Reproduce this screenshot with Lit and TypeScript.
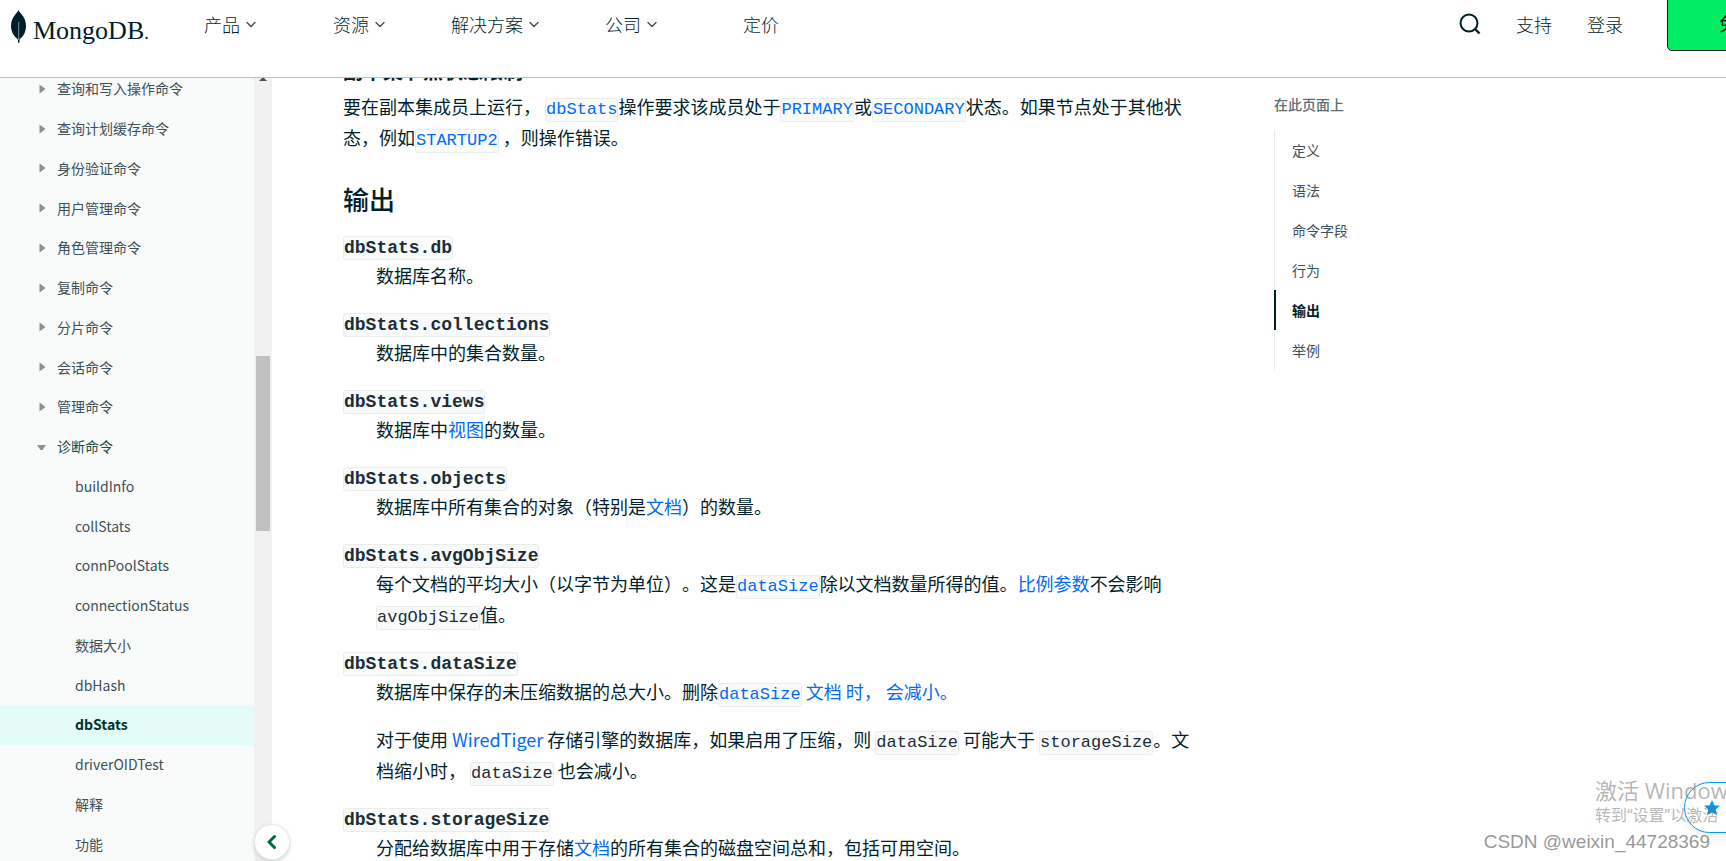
import { LitElement, html, css, svg } from "lit";
import { customElement, state } from "lit/decorators.js";
import { classMap } from "lit/directives/class-map.js";

const chevron = svg`<path d="M1 1.5 5 5.5 9 1.5" fill="none" stroke="#3d4f58" stroke-width="1.4" stroke-linecap="round" />`;

@customElement("site-header")
class SiteHeader extends LitElement {
  static styles = css`
    :host {
      display: block;
      overflow: hidden;
      border-bottom: 1px solid #b8c4c2;
      background: #fff;
    }
    .bar {
      display: flex;
      align-items: flex-start;
      height: 77px;
      padding-left: 10px;
    }
    a {
      color: #001e2b;
      text-decoration: none;
    }
    .logo {
      display: flex;
      align-items: flex-start;
      gap: 6px;
      padding-top: 10px;
      width: 194px;
      flex: none;
      font: 26px/42px "Liberation Serif", serif;
    }
    .logo svg {
      flex: none;
    }
    .logo small {
      font-size: 18px;
    }
    nav {
      display: flex;
      flex: 1;
      gap: 66px;
      line-height: 48px;
      font-weight: 300;
      white-space: nowrap;
    }
    .item {
      display: flex;
      align-items: center;
      gap: 6px;
      height: 48px;
      padding: 0;
      border: 0;
      background: none;
      font: inherit;
      color: #001e2b;
    }
    .item:first-child {
      margin-right: 11px;
    }
    .plain {
      padding-left: 20px;
    }
    .tools {
      display: flex;
      flex: none;
      gap: 35px;
      line-height: 48px;
      font-weight: 300;
    }
    .search {
      height: 48px;
      padding: 0;
      border: 0;
      background: none;
      display: flex;
      align-items: center;
    }
    .cta {
      box-sizing: border-box;
      flex: none;
      width: 176px;
      height: 56px;
      margin: -5px -117px 0 44px;
      border: 1px solid #001e2b;
      border-radius: 5px;
      background: #00ed64;
      color: #001e2b;
      font: inherit;
      font-weight: 400;
    }
  `;

  render() {
    return html`
      <header class="bar">
        <a class="logo" href="#" aria-label="MongoDB">
          <svg width="17" height="34" viewBox="0 0 17 34">
            <path
              d="M8.6 0C7.9 1.6 6.6 2.9 5.3 4.5 2.600 7.800 1 11.700 1 16c0 5.700 3 10.300 6.700 13.100L8.200 33h1l.5-3.900C13.500 26.400 16 21.800 16 16c0-4.700-1.800-8.600-4.300-11.500C10.400 2.900 9.200 1.600 8.600 0z"
              fill="#001e2b"
            />
            <path d="M8.700 12v18" stroke="#8aa09c" stroke-width="0.900" />
          </svg>
          <span>MongoDB<small>.</small></span>
        </a>
        <nav>
          ${["产品", "资源", "解决方案", "公司"].map(
            (t) => html`<button class="item">
              <span>${t}</span><svg width="10" height="7" viewBox="0 0 10 7">${chevron}</svg>
            </button>`
          )}
          <a class="plain" href="#">定价</a>
        </nav>
        <div class="tools">
          <button class="search" aria-label="搜索">
            <svg width="22" height="22" viewBox="0 0 22 22" fill="none" stroke="#001e2b" stroke-width="2">
              <circle cx="10" cy="10" r="8.500" />
              <path d="M16 16l4.500 4.500" stroke-width="2.400" />
            </svg>
          </button>
          <a href="#">支持</a>
          <a href="#">登录</a>
        </div>
        <button class="cta">免费试用</button>
      </header>
    `;
  }
}

@customElement("side-nav")
class SideNav extends LitElement {
  static styles = css`
    :host {
      display: grid;
      grid-template-columns: minmax(0, 1fr) 18px;
      position: relative;
      min-height: 0;
      background: #f9fbfa;
      font-size: 14px;
    }
    .clip {
      overflow: hidden;
      min-height: 0;
      height: 100%;
    }
    ul {
      list-style: none;
      margin: -9px 0 0;
      padding: 0;
      height: calc(100% + 12px);
      display: grid;
      grid-auto-rows: minmax(36px, 1fr);
    }
    a {
      display: flex;
      align-items: center;
      height: 100%;
      color: #3d4f58;
      text-decoration: none;
    }
    .group {
      gap: 11px;
      padding-left: 37px;
    }
    .group svg {
      flex: none;
    }
    .leaf {
      padding-left: 75px;
    }
    .open {
      color: #1c4a40;
    }
    .current {
      background: #e3fcf7;
      color: #00332b;
      font-weight: 700;
    }
    .track {
      display: grid;
      grid-template-rows: 278fr 175fr 330fr;
      justify-items: center;
      background: #f1f1f1;
    }
    .thumb {
      grid-row: 2;
      width: 14px;
      background: #c1c1c1;
    }
    .arrow {
      grid-row: 1;
      width: 8px;
      height: 3px;
      background: #505050;
      clip-path: polygon(3px 0, 5px 0, 100% 100%, 0 100%);
    }
    .fold {
      position: absolute;
      right: -17px;
      bottom: 2px;
      width: 34px;
      height: 34px;
      padding: 0;
      border: 0;
      border-radius: 50%;
      background: #fff;
      box-shadow: 0 0 1px 1px #e8edeb, 0 2px 5px rgba(0, 30, 43, 0.250);
      display: grid;
      place-items: center;
      z-index: 1;
    }
  `;

  @state() private groups = [
    "查询和写入操作命令",
    "查询计划缓存命令",
    "身份验证命令",
    "用户管理命令",
    "角色管理命令",
    "复制命令",
    "分片命令",
    "会话命令",
    "管理命令",
    "诊断命令",
  ];
  @state() private leaves = [
    "buildInfo",
    "collStats",
    "connPoolStats",
    "connectionStatus",
    "数据大小",
    "dbHash",
    "dbStats",
    "driverOIDTest",
    "解释",
    "功能",
  ];

  render() {
    return html`
      <nav class="clip">
        <ul>
          ${this.groups.map((g) => {
            const open = g === "诊断命令";
            return html`<li>
              <a href="#" class=${classMap({ group: true, open })}>
                <svg width="9" height="10" viewBox="0 0 9 10" fill="#889397">
                  ${open ? svg`<path d="M0 3h9L5.500 8h-2z" />` : svg`<path d="M2.500.5v9L8 5.500v-1z" />`}
                </svg>
                ${g}
              </a>
            </li>`;
          })}
          ${this.leaves.map(
            (l) => html`<li>
              <a href="#" class=${classMap({ leaf: true, current: l === "dbStats" })}>${l}</a>
            </li>`
          )}
        </ul>
      </nav>
      <div class="track"><div class="arrow"></div><div class="thumb"></div></div>
      <button class="fold" aria-label="收起">
        <svg width="10" height="16" viewBox="0 0 10 16">
          <path d="M7.500 2.500 2 8 7.500 13.500" fill="none" stroke="#00684a" stroke-width="3" stroke-linecap="round" />
        </svg>
      </button>
    `;
  }
}

@customElement("doc-article")
class DocArticle extends LitElement {
  static styles = css`
    :host {
      display: block;
      min-width: 0;
      line-height: 31px;
      text-spacing-trim: space-all;
    }
    h2,
    h3,
    p,
    dl,
    dt,
    dd {
      margin: 0;
    }
    h3 {
      margin-top: -21px;
      font-size: 20px;
      line-height: 28px;
      font-weight: 700;
    }
    h3 + p {
      margin-top: 6px;
    }
    h2 {
      margin: 30px 0 15px;
      font-size: 26px;
      line-height: 32px;
      font-weight: 500;
    }
    dt {
      line-height: 30px;
    }
    dd {
      margin: 0 0 16px 33px;
    }
    dd p + p {
      margin-top: 17px;
    }
    a {
      color: #016bf8;
      text-decoration: none;
    }
    code {
      display: inline-block;
      border: 1px solid #e8edeb;
      border-radius: 3px;
      background: #f9fbfa;
      font: 17px/22px "Liberation Mono", monospace;
      color: #1c2d38;
    }
    a code {
      color: inherit;
    }
    dt code {
      font-size: 18px;
      font-weight: 700;
    }
  `;

  private entry(name: string, body: unknown) {
    return html`<dt><code>dbStats.${name}</code></dt>
      <dd>${body}</dd>`;
  }

  render() {
    return html`
      <h3>副本集节点状态限制</h3>
      <p>要在副本集成员上运行， <a href="#"><code>dbStats</code></a>操作要求该成员处于<a href="#"><code>PRIMARY</code></a>或<a href="#"><code>SECONDARY</code></a>状态。如果节点处于其他状态，例如<a href="#"><code>STARTUP2</code></a> ，则操作错误。</p>
      <h2>输出</h2>
      <dl>
        ${this.entry("db", "数据库名称。")}
        ${this.entry("collections", "数据库中的集合数量。")}
        ${this.entry("views", html`数据库中<a href="#">视图</a>的数量。`)}
        ${this.entry("objects", html`数据库中所有集合的对象（特别是<a href="#">文档</a>）的数量。`)}
        ${this.entry(
          "avgObjSize",
          html`每个文档的平均大小（以字节为单位）。这是<a href="#"><code>dataSize</code></a>除以文档数量所得的值。<a href="#">比例参数</a>不会影响<code>avgObjSize</code>值。`
        )}
        ${this.entry(
          "dataSize",
          html`<p>数据库中保存的未压缩数据的总大小。删除<a href="#"><code>dataSize</code> 文档 时， 会减小。</a></p>
            <p>对于使用 <a href="#">WiredTiger</a> 存储引擎的数据库，如果启用了压缩，则 <code>dataSize</code> 可能大于 <code>storageSize</code>。文档缩小时， <code>dataSize</code> 也会减小。</p>`
        )}
        ${this.entry(
          "storageSize",
          html`分配给数据库中用于存储<a href="#">文档</a>的所有集合的磁盘空间总和，包括可用空间。`
        )}
      </dl>
    `;
  }
}

@customElement("page-toc")
class PageToc extends LitElement {
  static styles = css`
    :host {
      display: block;
      padding-top: 16px;
      font-size: 14px;
      line-height: 20px;
    }
    .title {
      margin: 0 0 16px;
      font-weight: 500;
      color: #5c6c75;
    }
    ul {
      list-style: none;
      margin: 0;
      padding: 0;
      box-shadow: inset 1px 0 #e8edeb;
    }
    a {
      display: block;
      padding: 10px 0 10px 16px;
      border-left: 2px solid transparent;
      color: #3d4f58;
      text-decoration: none;
    }
    .active {
      border-color: #001e2b;
      font-weight: 700;
      color: #001e2b;
    }
  `;

  render() {
    return html`
      <p class="title">在此页面上</p>
      <ul>
        ${["定义", "语法", "命令字段", "行为", "输出", "举例"].map(
          (t) => html`<li><a href="#" class=${classMap({ active: t === "输出" })}>${t}</a></li>`
        )}
      </ul>
    `;
  }
}

@customElement("app-root")
class AppRoot extends LitElement {
  static styles = css`
    :host {
      display: grid;
      grid-template-rows: auto minmax(0, 1fr);
      position: relative;
      height: 100vh;
      overflow: hidden;
      background: #fff;
      color: #001e2b;
      font: 18px/31px "Noto Sans CJK SC", sans-serif;
    }
    .body {
      display: grid;
      grid-template-columns: 272px minmax(0, 1fr);
      min-height: 0;
    }
    main {
      display: grid;
      grid-template-columns: minmax(0, 1fr) 452px;
      gap: 78px;
      padding-left: 71px;
      overflow: hidden;
    }
    .feedback {
      position: absolute;
      right: -70px;
      bottom: 28px;
      box-sizing: border-box;
      width: 112px;
      height: 51px;
      padding: 0 0 0 19px;
      display: flex;
      align-items: center;
      gap: 5px;
      border: 1px solid #0498ec;
      border-radius: 26px;
      background: #fff;
      box-shadow: 0 2px 12px rgba(0, 30, 43, 0.100);
      font: 700 16px/20px "Noto Sans CJK SC", sans-serif;
      color: #1a567e;
    }
    .activate {
      position: absolute;
      left: calc(100% - 131px);
      bottom: 35px;
      white-space: nowrap;
      color: rgba(110, 110, 110, 0.500);
      font: 400 16px/22px "Open Sans", "Noto Sans CJK SC", sans-serif;
      pointer-events: none;
    }
    .activate strong {
      display: block;
      font-size: 22px;
      line-height: 28px;
      font-weight: 400;
    }
    .credit {
      position: absolute;
      right: 16px;
      bottom: 8px;
      font: 19px/22px "Liberation Sans", sans-serif;
      color: #999;
      pointer-events: none;
    }
  `;

  render() {
    return html`
      <site-header></site-header>
      <div class="body">
        <side-nav></side-nav>
        <main>
          <doc-article></doc-article>
          <page-toc></page-toc>
        </main>
      </div>
      <button class="feedback">
        <svg width="16" height="16" viewBox="0 0 16 16" fill="#0498ec">
          <path d="M8 0l2.300 5.300 5.700.5-4.300 3.800 1.300 5.700L8 12.300 3 15.300l1.300-5.700L0 5.800l5.700-.5z" />
        </svg>
        <span>收藏</span>
      </button>
      <div class="activate"><strong>激活 Windows</strong>转到“设置”以激活</div>
      <div class="credit">CSDN @weixin_44728369</div>
    `;
  }
}
